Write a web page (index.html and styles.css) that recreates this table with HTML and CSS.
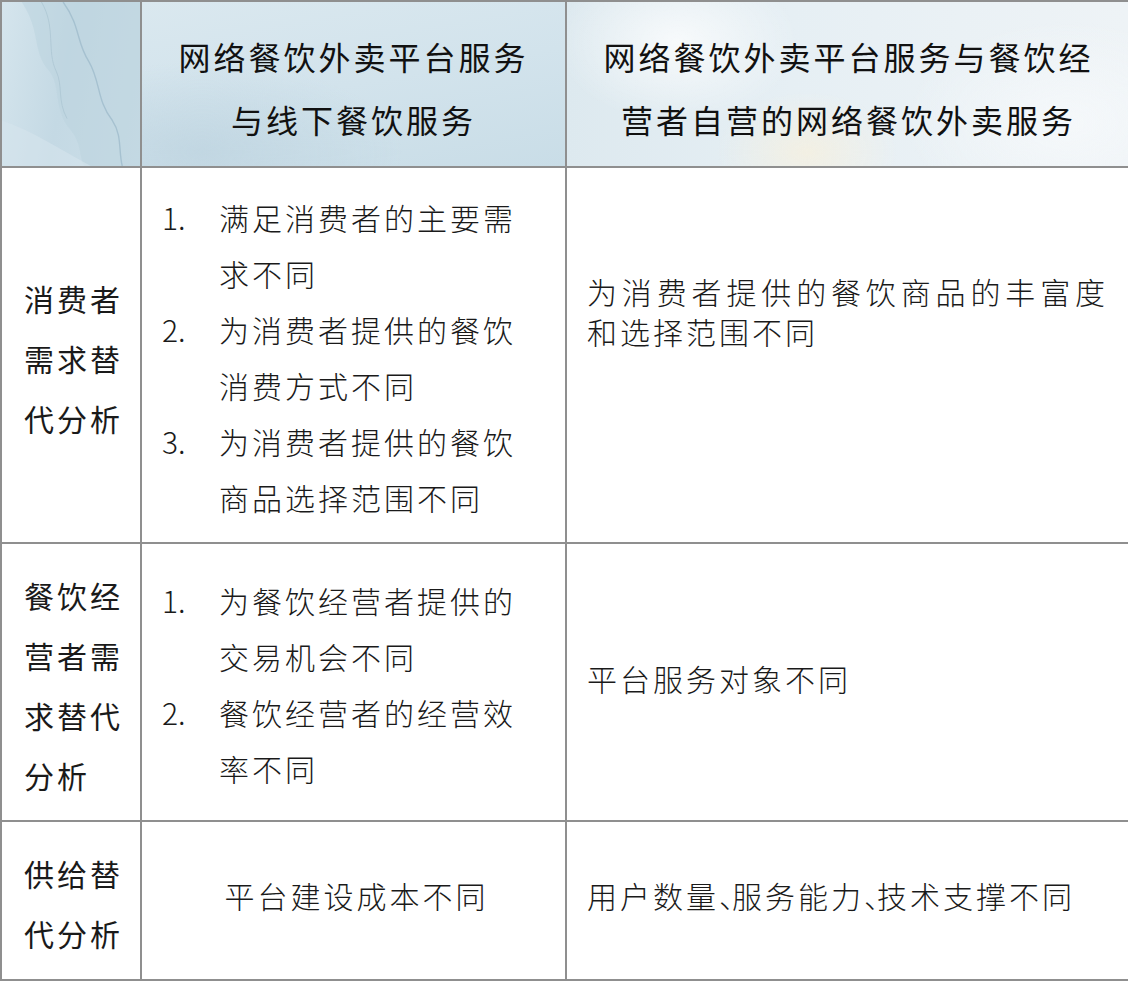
FILE: index.html
```html
<!DOCTYPE html>
<html lang="zh-CN">
<head>
<meta charset="utf-8">
<title>替代分析</title>
<link rel="stylesheet" href="styles.css">
</head>
<body>
<table class="grid">
  <colgroup>
    <col class="c1">
    <col class="c2">
    <col class="c3">
  </colgroup>
  <thead>
    <tr class="head">
      <th class="h h1">
        <svg class="wave" viewBox="0 0 140 166" preserveAspectRatio="none" aria-hidden="true">
          <path d="M20 0 C40 30 30 50 48 70 C60 85 52 110 70 130 C82 145 78 160 84 166 L140 166 L140 0 Z" fill="#bcd3df" opacity="0.55"/>
          <path d="M62 0 C80 25 75 40 88 60 C100 80 96 100 112 120 C122 135 118 150 122 166" fill="none" stroke="#9fbccc" stroke-width="1.4" opacity="0.8"/>
          <path d="M40 0 C55 25 45 50 55 70 C62 85 56 100 66 118" fill="none" stroke="#a9c3d1" stroke-width="1" opacity="0.7"/>
          <path d="M0 120 C30 130 60 150 90 166 L0 166 Z" fill="#d6e5ec" opacity="0.6"/>
        </svg>
      </th>
      <th class="h h2">网络餐饮外卖平台服务与线下餐饮服务</th>
      <th class="h h3">网络餐饮外卖平台服务与餐饮经营者自营的网络餐饮外卖服务</th>
    </tr>
  </thead>
  <tbody>
    <tr class="r1">
      <td class="cell label">消费者需求替代分析</td>
      <td class="cell list-cell">
        <ol class="list">
          <li><span class="num">1.</span><span class="txt">满足消费者的主要需求不同</span></li>
          <li><span class="num">2.</span><span class="txt">为消费者提供的餐饮消费方式不同</span></li>
          <li><span class="num">3.</span><span class="txt">为消费者提供的餐饮商品选择范围不同</span></li>
        </ol>
      </td>
      <td class="cell plain top">为消费者提供的餐饮商品的丰富度和选择范围不同</td>
    </tr>
    <tr class="r2">
      <td class="cell label">餐饮经营者需求替代分析</td>
      <td class="cell list-cell">
        <ol class="list">
          <li><span class="num">1.</span><span class="txt">为餐饮经营者提供的交易机会不同</span></li>
          <li><span class="num">2.</span><span class="txt">餐饮经营者的经营效率不同</span></li>
        </ol>
      </td>
      <td class="cell plain mid">平台服务对象不同</td>
    </tr>
    <tr class="r3">
      <td class="cell label">供给替代分析</td>
      <td class="cell center">平台建设成本不同</td>
      <td class="cell plain low">用户数量<span class="p">、</span>服务能力<span class="p">、</span>技术支撑不同</td>
    </tr>
  </tbody>
</table>
</body>
</html>
```

FILE: styles.css
```css
html, body {
  margin: 0;
  padding: 0;
  background: #ffffff;
}

body {
  font-family: "Noto Sans CJK SC", "Noto Sans", sans-serif;
  color: #1a1a1a;
  width: 1128px;
}

.grid {
  width: 1128px;
  border-collapse: collapse;
  table-layout: fixed;
  border: 2px solid #8f8f8f;
}

.c1 { width: 140px; }
.c2 { width: 425px; }
.c3 { width: 563px; }

.h,
.cell {
  border: 2px solid #8f8f8f;
  vertical-align: middle;
}

/* header */
.head { height: 166px; }

.h {
  font-size: 32px;
  font-weight: 400;
  letter-spacing: 3px;
  line-height: 63px;
  color: #111;
  text-align: center;
  padding: 7px 22px 0 24px;
  position: relative;
}

.h1 {
  padding: 0;
  background:
    linear-gradient(100deg, #d5e5ed 0%, #c4d9e4 45%, #cddfe8 100%);
  overflow: hidden;
}

.wave {
  position: absolute;
  left: 0;
  top: 0;
  width: 100%;
  height: 100%;
}

.h2 {
  background:
    radial-gradient(ellipse 200px 90px at 60px 150px, rgba(190,212,224,0.8), rgba(190,212,224,0) 100%),
    linear-gradient(170deg, #dae8ef 0%, #d2e3ec 50%, #c9dde7 100%);
  padding-left: 26px;
  padding-right: 26px;
}

.h3 {
  background:
    radial-gradient(ellipse 120px 80px at 110px 40px, rgba(255,255,255,0.75), rgba(255,255,255,0) 100%),
    radial-gradient(ellipse 90px 60px at 240px 150px, rgba(248,240,220,0.7), rgba(248,240,220,0) 100%),
    radial-gradient(ellipse 160px 100px at 500px 120px, rgba(246,249,251,0.9), rgba(246,249,251,0) 100%),
    linear-gradient(90deg, #dde9ef 0%, #e6eff4 40%, #eaf1f5 70%, #eef3f6 100%);
}

/* body rows */
.r1 { height: 376px; }
.r2 { height: 278px; }
.r3 { height: 159px; }

.cell {
  font-size: 30px;
  font-weight: 300;
  letter-spacing: 3px;
  color: #1a1a1a;
  padding: 0;
}

.label {
  line-height: 60px;
  padding: 5px 10px 0 22px;
  font-weight: 400;
}

.list-cell {
  padding: 4px 18px 0 20px;
}

.list {
  list-style: none;
  margin: 0;
  padding: 0;
  line-height: 56px;
}

.list li {
  display: flex;
}

.num {
  flex: 0 0 57px;
  letter-spacing: 0;
}

.txt {
  flex: 1;
}

.center {
  text-align: center;
  line-height: 40px;
  padding: 0 16px 12px 22px;
}

.plain {
  line-height: 40px;
  padding: 0 20px 0 20px;
  text-align: justify;
}

.plain.top {
  vertical-align: top;
  padding-top: 103px;
}

.plain.mid {
  padding-bottom: 8px;
}

.plain.low {
  padding-bottom: 12px;
}

.p {
  font-feature-settings: "halt";
  letter-spacing: -2px;
}
```
